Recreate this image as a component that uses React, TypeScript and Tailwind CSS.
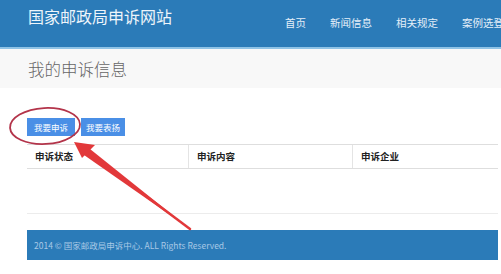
const NAV = ['首页', '新闻信息', '相关规定', '案例选登'];
const COLS = ['申诉状态', '申诉内容', '申诉企业'];

export default function App() {
  return (
    <div
      className="relative h-[274px] w-[501px] overflow-hidden bg-white"
      style={{ fontFamily: '"Noto Sans CJK SC", "Liberation Sans", sans-serif' }}
    >
      {/* 顶部导航 */}
      <header className="flex h-[49px] items-start border-b-2 border-[#8fc3e6] bg-[#2b7bb8] pl-[28px]">
        <div className="mt-[5px] whitespace-nowrap text-[16px] leading-[22px] text-[#eef5fb]">
          国家邮政局申诉网站
        </div>
        <nav className="ml-[113px] mt-[15px] flex gap-[24px] whitespace-nowrap text-[10.5px] leading-[16px] text-[#e4eff8]">
          {NAV.map((n) => (
            <span key={n}>{n}</span>
          ))}
        </nav>
      </header>

      {/* 页面标题 */}
      <div className="h-[39px] bg-[#f8f8f8] pl-[28px] pt-[9px] text-[16.5px] font-light leading-[22px] text-[#666]">
        我的申诉信息
      </div>

      <div className="pl-[27px] pr-[3px]">
        <div className="mt-[30px] flex gap-[6px]">
          <button className="h-[18px] w-[48px] bg-[#4a8fe6] text-[8.5px] text-white">我要申诉</button>
          <button className="h-[18px] w-[44px] bg-[#4a8fe6] text-[8.5px] text-white">我要表扬</button>
        </div>

        <div className="mt-[8px] grid h-[25px] grid-cols-[161px_164px_1fr] border-y border-[#dedede]">
          {COLS.map((c, i) => (
            <div
              key={c}
              className={`flex items-center pl-[8px] text-[9.5px] font-bold text-[#222] ${i > 0 ? 'border-l border-[#e4e4e4]' : ''}`}
            >
              {c}
            </div>
          ))}
        </div>

        <div className="mt-[44px] border-t border-[#ececec]" />

        <footer className="mt-[16px] flex h-[30px] items-center bg-[#2b7bb8] pl-[7px] text-[8.5px] text-[#a9c9e6]">
          2014 © 国家邮政局申诉中心. ALL Rights Reserved.
        </footer>
      </div>

      {/* 标注：红圈与箭头 */}
      <svg className="pointer-events-none absolute left-0 top-0" width="501" height="274" viewBox="0 0 501 274">
        <ellipse cx="45" cy="126" rx="35" ry="18" fill="none" stroke="#b3344a" strokeWidth="1.8" transform="rotate(-3 45 126)" />
        <path d="M190 229 L90 149 L84 155 Z" fill="#e2383a" />
        <path d="M190 229 L86 151" stroke="#e2383a" strokeWidth="2.5" strokeLinecap="round" />
        <polygon points="74,142 95,145 82,158" fill="#e2383a" />
      </svg>
    </div>
  );
}
